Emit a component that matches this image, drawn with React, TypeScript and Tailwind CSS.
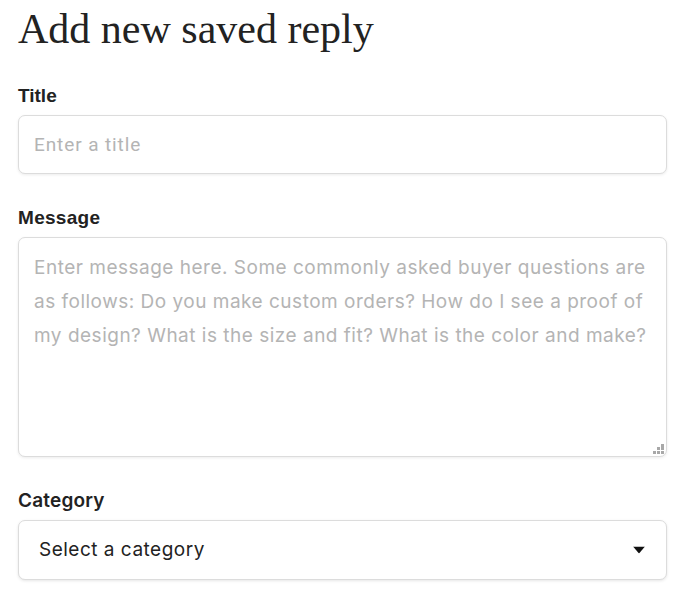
import { useState } from 'react';

export default function App() {
    const [category, setCategory] = useState('');

    return (
        <div className="min-h-screen bg-white pr-[12px] pl-[18px] text-[#222222]">
            {/* Heading */}
            <h1 className="pt-[5px] text-[42px] leading-[48px] font-normal [font-family:'Liberation_Serif','Times_New_Roman',serif]">
                Add new saved reply
            </h1>

            {/* Title */}
            <label className="mt-[32px] block text-[19px] leading-[22px] font-bold [font-family:'Liberation_Sans',Arial,sans-serif]">
                Title
            </label>
            <input
                type="text"
                placeholder="Enter a title"
                className="mt-[8px] block h-[59px] w-full rounded-[7px] border border-[#dcdcdc] bg-white px-[15px] text-[19px] tracking-[0.9px] shadow-[0_1px_3px_rgba(0,0,0,0.08)] outline-none placeholder:text-[#b4b4b4] [font-family:Roboto,sans-serif]"
            />

            {/* Message */}
            <label className="mt-[33px] block text-[19px] leading-[22px] font-bold tracking-[0.3px] [font-family:'Liberation_Sans',Arial,sans-serif]">
                Message
            </label>
            <div className="relative mt-[8px]">
                <textarea
                    placeholder={
                        'Enter message here. Some commonly asked buyer questions are\nas follows: Do you make custom orders? How do I see a proof of\nmy design? What is the size and fit? What is the color and make?'
                    }
                    className="block h-[220px] w-full resize-none rounded-[7px] border border-[#dcdcdc] bg-white px-[15px] pt-[13px] text-[19px] leading-[34px] tracking-[0.5px] whitespace-pre shadow-[0_1px_3px_rgba(0,0,0,0.08)] outline-none placeholder:text-[#b4b4b4] [font-family:Inter,sans-serif]"
                />
                {/* resize grip */}
                <svg className="absolute right-[3px] bottom-[3px]" width="11" height="11" viewBox="0 0 11 11">
                    <rect x="8" y="1" width="3" height="3" fill="#a8a8a8" />
                    <rect x="4" y="4" width="3" height="3" fill="#a8a8a8" />
                    <rect x="8" y="4" width="3" height="3" fill="#a8a8a8" />
                    <rect x="0" y="8" width="3" height="3" fill="#a8a8a8" />
                    <rect x="4" y="8" width="3" height="3" fill="#a8a8a8" />
                    <rect x="8" y="8" width="3" height="3" fill="#a8a8a8" />
                </svg>
            </div>

            {/* Category */}
            <label className="mt-[33px] block text-[19px] leading-[22px] font-semibold tracking-[0.2px] [font-family:Inter,sans-serif]">
                Category
            </label>
            <div className="relative mt-[8px]">
                <select
                    value={category}
                    onChange={(e) => setCategory(e.target.value)}
                    className="block h-[60px] w-full appearance-none rounded-[7px] border border-[#dcdcdc] bg-white px-[20px] text-[19px] tracking-[0.5px] text-[#222222] shadow-[0_1px_3px_rgba(0,0,0,0.1)] outline-none [font-family:Inter,sans-serif]"
                >
                    <option value="">Select a category</option>
                    <option value="shipping">Shipping</option>
                    <option value="custom">Custom orders</option>
                </select>
                <svg className="pointer-events-none absolute top-1/2 right-[22px] -translate-y-1/2" width="12" height="7" viewBox="0 0 12 7">
                    <path d="M0 0h12L6 7z" fill="#111111" />
                </svg>
            </div>
        </div>
    );
}
